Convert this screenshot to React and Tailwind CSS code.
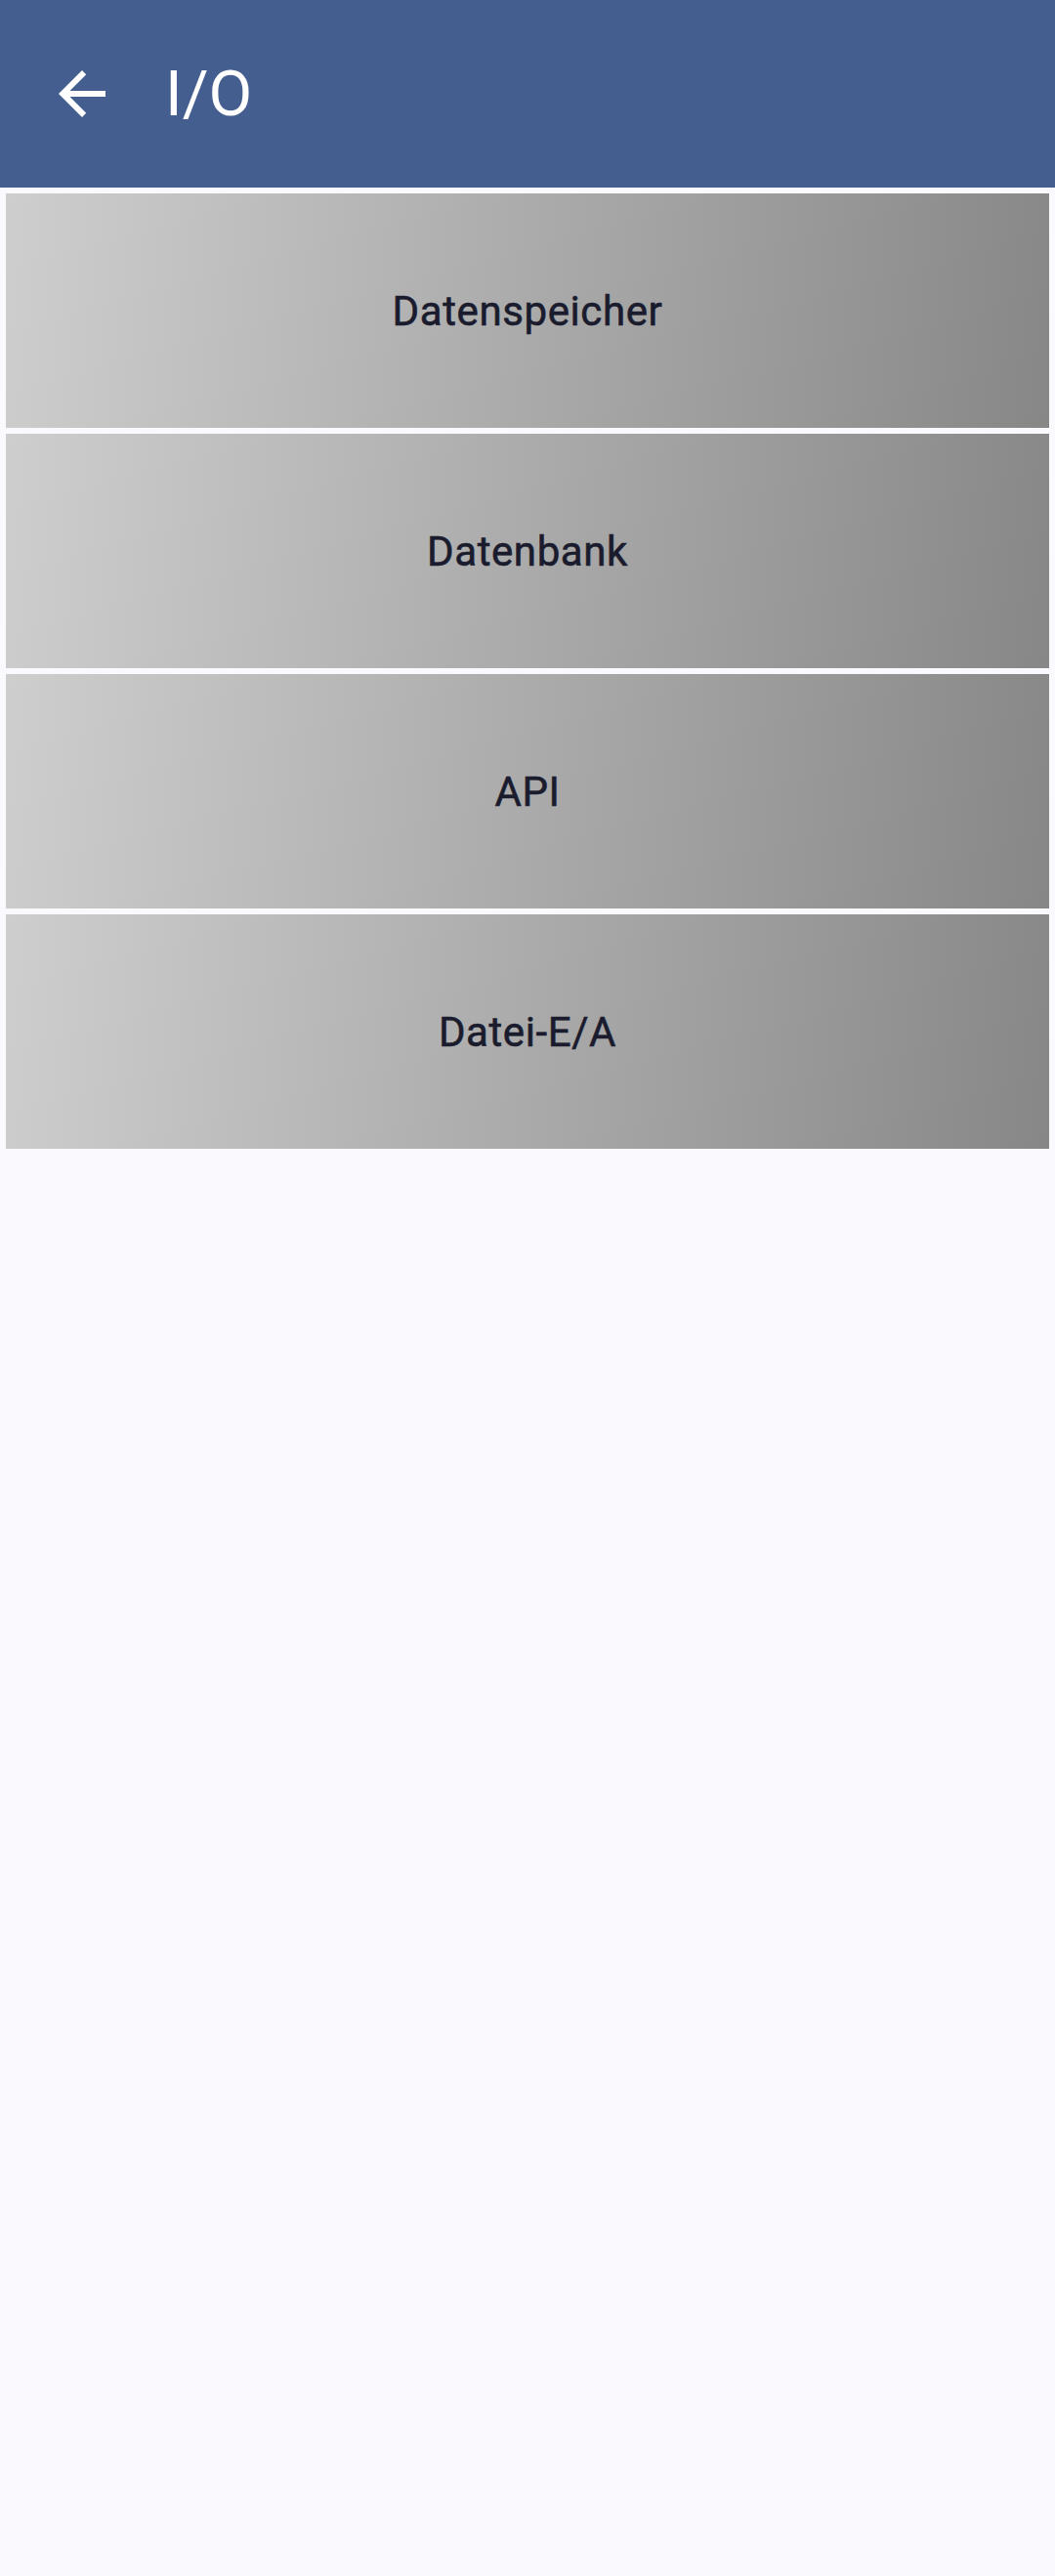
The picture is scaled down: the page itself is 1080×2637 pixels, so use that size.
const items = ["Datenspeicher", "Datenbank", "API", "Datei-E/A"];

const BackArrow = () => (
  <svg viewBox="0 0 24 24" className="w-[72px] h-[72px]" fill="white">
    <path d="M20 11H7.83l5.59-5.59L12 4l-8 8 8 8 1.41-1.41L7.83 13H20v-2z" />
  </svg>
);

export default function App() {
  return (
    <div className="min-h-[2637px] w-[1080px] bg-[#f9f9fe] font-['Roboto',sans-serif]">
      {/* HEADER */}
      <div className="h-[192px] bg-[#435e8f] flex items-center pl-[48px]">
        <BackArrow />
        <h1 className="ml-[49px] text-[65px] text-white font-normal leading-none">I/O</h1>
      </div>

      {/* LIST */}
      <div className="flex flex-col gap-[6px] pt-[6px] px-[6px]">
        {items.map((label) => (
          <button
            key={label}
            className="h-[240px] w-full flex items-center justify-center bg-linear-[97deg] from-[#cecece] to-[#878787]"
          >
            <span className="text-[42px] font-normal text-[#1a1c2e] tracking-[0.6px] [-webkit-text-stroke:0.6px_#1a1c2e]">
              {label}
            </span>
          </button>
        ))}
      </div>
    </div>
  );
}
